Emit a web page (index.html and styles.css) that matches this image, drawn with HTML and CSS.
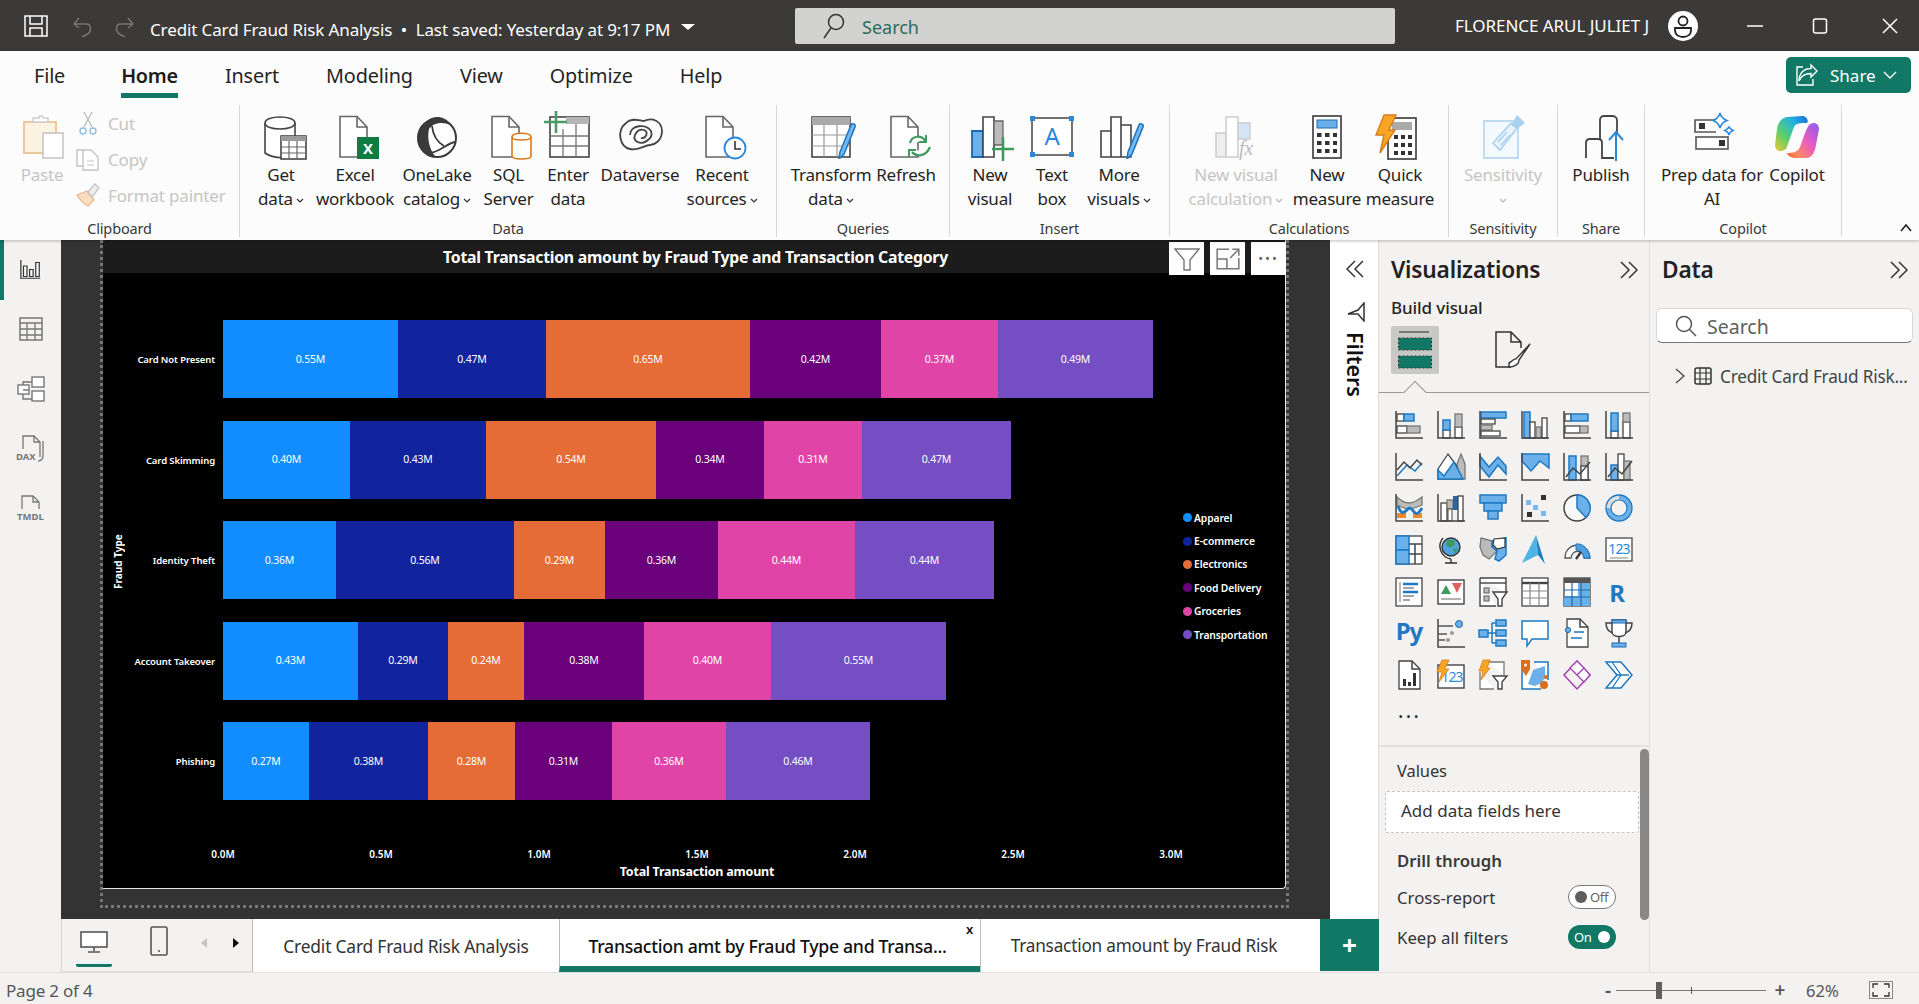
FILE: index.html
```html
<!DOCTYPE html>
<html lang="en">
<head>
<meta charset="utf-8">
<title>Credit Card Fraud Risk Analysis</title>
<link rel="stylesheet" href="styles.css">
</head>
<body>
<svg class="defs" width="0" height="0" aria-hidden="true">
  <defs>
    <linearGradient id="cpA" x1="1" y1="0" x2="0" y2="1"><stop offset="0" stop-color="#1667d9"/><stop offset=".3" stop-color="#22b3e0"/><stop offset=".65" stop-color="#5ccf6a"/><stop offset="1" stop-color="#f0c832"/></linearGradient>
    <linearGradient id="cpB" x1="1" y1="0" x2="0" y2="1"><stop offset="0" stop-color="#8a5cf0"/><stop offset=".45" stop-color="#e85cc0"/><stop offset=".8" stop-color="#ff8a5c"/><stop offset="1" stop-color="#e8562c"/></linearGradient>
    <symbol id="doc" viewBox="0 0 44 44"><path d="M3 1.500H20L30 12V42H3Z" fill="#fff" stroke="#666" stroke-width="1.600"/><path d="M20 1.500V12H30" fill="none" stroke="#666" stroke-width="1.600"/></symbol>
    <symbol id="pencil" viewBox="0 0 44 44"><path d="M27 37L38 10C39 7.500 43 9 42 12L31 39L26 44Z" fill="#7ab9ee" stroke="#1e78c2" stroke-width="1.600"/></symbol>
  </defs>
</svg>

<header class="titlebar">
  <svg class="tb-save" viewBox="0 0 24 22"><path d="M1 1H23V21H1ZM6 1V9H18V1M6 21V13H18V21" fill="none" stroke="#fff" stroke-width="1.500"/></svg>
  <svg class="tb-undo" viewBox="0 0 20 22"><path d="M2 9H14C20 9 20 17 14 20L10 22M2 9L7 3M2 9L7 13" fill="none" stroke="#77766f" stroke-width="1.500"/></svg>
  <svg class="tb-redo" viewBox="0 0 20 22"><path d="M18 9H6C0 9 0 17 6 20L10 22M18 9L13 3M18 9L13 13" fill="none" stroke="#77766f" stroke-width="1.500"/></svg>
  <div class="tb-title">Credit Card Fraud Risk Analysis&nbsp;&nbsp;•&nbsp;&nbsp;Last saved: Yesterday at 9:17 PM</div>
  <span class="tb-caret"></span>
  <div class="tb-search">
    <svg class="tb-search-ic" viewBox="0 0 22 26"><circle cx="13" cy="9" r="7.500" fill="none" stroke="#333" stroke-width="1.500"/><path d="M8 15L1 25" stroke="#333" stroke-width="1.500"/></svg>
    <span class="tb-search-tx">Search</span>
  </div>
  <div class="tb-user">FLORENCE ARUL JULIET J</div>
  <svg class="tb-avatar" viewBox="0 0 30 30"><circle cx="15" cy="15" r="15" fill="#fff"/><circle cx="15" cy="10" r="4.500" fill="none" stroke="#222" stroke-width="1.800"/><path d="M7 17H23V19C23 24 19 26 15 26C11 26 7 24 7 19Z" fill="none" stroke="#222" stroke-width="1.800"/></svg>
  <svg class="tb-min" viewBox="0 0 16 2"><path d="M0 1H16" stroke="#fff" stroke-width="1.500"/></svg>
  <svg class="tb-max" viewBox="0 0 16 16"><rect x="1.500" y="1" width="13" height="14" rx="2" fill="none" stroke="#fff" stroke-width="1.500"/></svg>
  <svg class="tb-x" viewBox="0 0 16 16"><path d="M1 1L15 15M15 1L1 15" stroke="#fff" stroke-width="1.500"/></svg>
</header>

<section class="ribbon">
  <nav class="rb-tabs">
    <span class="rb-tab rb-file">File</span>
    <span class="rb-tab rb-on">Home</span>
    <span class="rb-tab">Insert</span>
    <span class="rb-tab">Modeling</span>
    <span class="rb-tab">View</span>
    <span class="rb-tab">Optimize</span>
    <span class="rb-tab">Help</span>
    <button class="share">
      <svg class="share-ic" viewBox="0 0 22 24"><path d="M15 2L21 8L15 14V10.500C9 10.500 5 13 3 18C3 10 8 5.500 15 5.500Z" fill="none" stroke="#fff" stroke-width="1.400"/><path d="M7 4H1V22H17V16" fill="none" stroke="#fff" stroke-width="1.400"/></svg>
      <span>Share</span>
      <svg class="share-cv" viewBox="0 0 14 8"><path d="M1 1L7 7L13 1" fill="none" stroke="#fff" stroke-width="1.400"/></svg>
    </button>
  </nav>
  <div class="rb-groups">
    <div class="grp g-clip">
      <div class="grp-items">
        <div class="it w-paste off">
          <svg class="ric" viewBox="0 0 44 44"><path d="M4 7H36V38H4Z" fill="#fdf3e3" stroke="#f0c79a" stroke-width="2"/><path d="M13 7V3H19C19 0 23 0 23 3H28V7Z" fill="#fff" stroke="#cfcfcf" stroke-width="1.500"/><rect x="23" y="18" width="20" height="25" fill="#fff" stroke="#c4c4c4" stroke-width="1.500"/></svg>
          <span class="lb">Paste</span>
        </div>
        <div class="clip-col off">
          <div class="clip-row"><svg class="cic" viewBox="0 0 24 24"><path d="M8 1L16 16M16 1L8 16" stroke="#bdbdbd" stroke-width="1.400"/><circle cx="7" cy="20" r="3" fill="none" stroke="#93bde3" stroke-width="1.400"/><circle cx="17" cy="20" r="3" fill="none" stroke="#93bde3" stroke-width="1.400"/></svg><span>Cut</span></div>
          <div class="clip-row"><svg class="cic" viewBox="0 0 24 24"><path d="M7 3H1V19H7M7 3H15L22 10V23H7Z" fill="#fff" stroke="#c4c4c4" stroke-width="1.400"/><path d="M11 14H18M11 18H18" stroke="#c4c4c4" stroke-width="1.200"/></svg><span>Copy</span></div>
          <div class="clip-row"><svg class="cic" viewBox="0 0 24 24"><path d="M1 12L11 8L18 17L12 23C8 21 4 17 1 12Z" fill="#f9ddc0" stroke="#eeb58a" stroke-width="1.300"/><path d="M12 9L19 1L23 5L16 14Z" fill="#eee" stroke="#c4c4c4" stroke-width="1.300"/></svg><span>Format painter</span></div>
        </div>
      </div>
      <div class="grp-lb">Clipboard</div>
    </div>

    <div class="grp g-data">
      <div class="grp-items">
        <div class="it w-get">
          <svg class="ric" viewBox="0 0 44 44"><path d="M2 8C2 0 32 0 32 8V40C32 44 10 44 2 38Z" fill="#fff" stroke="#444" stroke-width="1.600"/><path d="M2 8C2 16 32 16 32 8" fill="none" stroke="#444" stroke-width="1.600"/><rect x="18" y="21" width="25" height="23" fill="#fff" stroke="#444" stroke-width="1.600"/><rect x="18" y="21" width="25" height="5" fill="#9a9a9a"/><path d="M18 32H43M18 38H43M26 26V44M34 26V44" stroke="#666" stroke-width="1.200"/></svg>
          <span class="lb">Get<br>data<svg class="cv" viewBox="0 0 8 5"><path d="M1 1L4 4L7 1" fill="none" stroke="#333" stroke-width="1.200"/></svg></span>
        </div>
        <div class="it w-excel">
          <svg class="ric" viewBox="0 0 44 44"><use href="#doc" width="44" height="44"/><rect x="20" y="22" width="22" height="22" fill="#107c41"/><text x="31" y="39" class="xl">X</text></svg>
          <span class="lb">Excel<br>workbook</span>
        </div>
        <div class="it w-lake">
          <svg class="ric" viewBox="0 0 44 44"><circle cx="22" cy="23" r="19" fill="#fff" stroke="#3a3a3a" stroke-width="2"/><path d="M12 6C4 12 0 26 6 34C10 40 16 42 20 41C14 34 12 22 14 14C18 8 26 6 36 10C30 0 18 0 12 6Z" fill="#3a3a3a"/><path d="M17 11C18 20 22 27 29 31M14 38C24 38 32 28 40 27" fill="none" stroke="#3a3a3a" stroke-width="1.800"/></svg>
          <span class="lb">OneLake<br>catalog<svg class="cv" viewBox="0 0 8 5"><path d="M1 1L4 4L7 1" fill="none" stroke="#333" stroke-width="1.200"/></svg></span>
        </div>
        <div class="it w-sql">
          <svg class="ric" viewBox="0 0 44 44"><use href="#doc" width="44" height="44" x="2"/><path d="M25 22C25 17 44 17 44 22V41C44 45 25 45 25 41Z" fill="#fff" stroke="#d97a1c" stroke-width="1.600"/><path d="M25 22C25 26 44 26 44 22" fill="none" stroke="#d97a1c" stroke-width="1.600"/></svg>
          <span class="lb">SQL<br>Server</span>
        </div>
        <div class="it w-enter">
          <svg class="ric" viewBox="0 0 44 44"><rect x="4" y="2" width="39" height="40" fill="#fff" stroke="#444" stroke-width="1.600"/><rect x="20" y="2" width="23" height="7" fill="#b5b5b5"/><path d="M4 21H43M4 31H43M17 14V42M30 9V42" stroke="#777" stroke-width="1.300"/><path d="M10 -4V18M-2 7H21" stroke="#4a9a6a" stroke-width="2.600"/></svg>
          <span class="lb">Enter<br>data</span>
        </div>
        <div class="it w-dv">
          <svg class="ric" viewBox="0 0 44 44"><path d="M8 8C14 2 22 6 26 6C34 2 44 6 44 16C44 26 36 30 32 30C26 30 22 36 12 34C2 32 -2 16 8 8Z" fill="none" stroke="#444" stroke-width="1.800"/><path d="M12 20C12 10 28 8 33 16C36 24 24 31 18 26C14 22 19 13 26 15C31 17 28 24 23 23" fill="none" stroke="#444" stroke-width="1.800"/></svg>
          <span class="lb">Dataverse</span>
        </div>
        <div class="it w-recent">
          <svg class="ric" viewBox="0 0 44 44"><use href="#doc" width="44" height="44" x="3"/><circle cx="35" cy="33" r="10.500" fill="#fff" stroke="#2b88d8" stroke-width="1.800"/><path d="M35 26V34H41" fill="none" stroke="#333" stroke-width="1.600"/></svg>
          <span class="lb">Recent<br>sources<svg class="cv" viewBox="0 0 8 5"><path d="M1 1L4 4L7 1" fill="none" stroke="#333" stroke-width="1.200"/></svg></span>
        </div>
      </div>
      <div class="grp-lb">Data</div>
    </div>

    <div class="grp g-query">
      <div class="grp-items">
        <div class="it w-trans">
          <svg class="ric" viewBox="0 0 44 44"><rect x="1" y="2" width="38" height="40" fill="#fff" stroke="#444" stroke-width="1.600"/><rect x="1" y="2" width="38" height="8" fill="#aaa"/><path d="M1 20H39M1 31H39M13 10V42M26 10V42" stroke="#999" stroke-width="1.200"/><use href="#pencil" width="44" height="44" x="2"/></svg>
          <span class="lb">Transform<br>data<svg class="cv" viewBox="0 0 8 5"><path d="M1 1L4 4L7 1" fill="none" stroke="#333" stroke-width="1.200"/></svg></span>
        </div>
        <div class="it w-refresh">
          <svg class="ric" viewBox="0 0 44 44"><use href="#doc" width="44" height="44"/><path d="M22 28C24 20 34 20 37 26M42 32C38 42 28 42 24 37" fill="#fff" stroke="#3f9a5f" stroke-width="2.200"/><path d="M38 20V27H31M21 42V35H28" fill="none" stroke="#3f9a5f" stroke-width="2"/></svg>
          <span class="lb">Refresh</span>
        </div>
      </div>
      <div class="grp-lb">Queries</div>
    </div>

    <div class="grp g-insert">
      <div class="grp-items">
        <div class="it w-nv">
          <svg class="ric" viewBox="0 0 44 44"><path d="M2 16H13V42H2Z" fill="#6cb0ea" stroke="#1e68b0" stroke-width="1.800"/><path d="M13 42V2H24V42Z" fill="#fff" stroke="#444" stroke-width="1.600"/><path d="M24 6H33V30H24Z" fill="#bbb" stroke="#666" stroke-width="1.300"/><path d="M33 22V46M22 34H44" stroke="#3f9a5f" stroke-width="2.600"/></svg>
          <span class="lb">New<br>visual</span>
        </div>
        <div class="it w-tb">
          <svg class="ric" viewBox="0 0 44 44"><rect x="2" y="3" width="40" height="37" fill="#fff" stroke="#444" stroke-width="1.500"/><rect x="0" y="1" width="5" height="5" fill="#2b88d8"/><rect x="39" y="1" width="5" height="5" fill="#2b88d8"/><rect x="0" y="37" width="5" height="5" fill="#2b88d8"/><rect x="39" y="37" width="5" height="5" fill="#2b88d8"/><text x="22" y="30" class="ta">A</text></svg>
          <span class="lb">Text<br>box</span>
        </div>
        <div class="it w-more">
          <svg class="ric" viewBox="0 0 44 44"><path d="M2 16H12V42H2ZM12 42V2H22V42ZM22 10H32V42H22Z" fill="#fff" stroke="#444" stroke-width="1.600"/><use href="#pencil" width="44" height="44" x="2"/></svg>
          <span class="lb">More<br>visuals<svg class="cv" viewBox="0 0 8 5"><path d="M1 1L4 4L7 1" fill="none" stroke="#333" stroke-width="1.200"/></svg></span>
        </div>
      </div>
      <div class="grp-lb">Insert</div>
    </div>

    <div class="grp g-calc">
      <div class="grp-items">
        <div class="it w-nvc off">
          <svg class="ric" viewBox="0 0 44 44"><path d="M2 18H12V42H2Z" fill="#eee" stroke="#ccc" stroke-width="1.500"/><path d="M12 42V2H24V42Z" fill="#fff" stroke="#ccc" stroke-width="1.500"/><path d="M24 8H36V24H24Z" fill="#d3e5f5" stroke="#ccc" stroke-width="1.300"/><text x="32" y="40" class="fx">fx</text></svg>
          <span class="lb">New visual<br>calculation<svg class="cv" viewBox="0 0 8 5"><path d="M1 1L4 4L7 1" fill="none" stroke="#bbb" stroke-width="1.200"/></svg></span>
        </div>
        <div class="it w-nm">
          <svg class="ric" viewBox="0 0 44 44"><rect x="8" y="1" width="28" height="42" fill="#fff" stroke="#444" stroke-width="1.700"/><rect x="12" y="5" width="20" height="8" fill="#6cb0ea" stroke="#1e68b0"/><path d="M12 20H32M12 28H32M12 36H32" stroke="#333" stroke-width="4" stroke-dasharray="4.500 3.500"/></svg>
          <span class="lb">New<br>measure</span>
        </div>
        <div class="it w-qm">
          <svg class="ric" viewBox="0 0 44 44"><rect x="14" y="3" width="28" height="41" fill="#fff" stroke="#444" stroke-width="1.700"/><rect x="18" y="7" width="20" height="8" fill="#aaa"/><path d="M20 22H38M20 30H38M20 38H38" stroke="#333" stroke-width="4" stroke-dasharray="4 3"/><path d="M10 0H22L15 15H21L6 38L10 20H2Z" fill="#f6a623" stroke="#d97a1c" stroke-width="1.400"/></svg>
          <span class="lb">Quick<br>measure</span>
        </div>
      </div>
      <div class="grp-lb">Calculations</div>
    </div>

    <div class="grp g-sens">
      <div class="grp-items">
        <div class="it w-sen off">
          <svg class="ric" viewBox="0 0 44 44"><path d="M3 6H37V43H3Z" fill="#f4f9fd" stroke="#bcdaf2" stroke-width="1.800"/><path d="M12 28L30 8L36 13L19 35Z" fill="#e9f3fb" stroke="#a8d0ef" stroke-width="1.500"/><path d="M30 10L36 0L44 8L36 14Z" fill="#a8d0ef"/><path d="M17 27L26 17M20 30L29 20" stroke="#a8d0ef" stroke-width="1.300"/></svg>
          <span class="lb">Sensitivity<br><svg class="cv cv-solo" viewBox="0 0 8 5"><path d="M1 1L4 4L7 1" fill="none" stroke="#bbb" stroke-width="1.200"/></svg></span>
        </div>
      </div>
      <div class="grp-lb">Sensitivity</div>
    </div>

    <div class="grp g-share">
      <div class="grp-items">
        <div class="it w-pub">
          <svg class="ric" viewBox="0 0 44 44"><path d="M17 24V5C17 2 19 1 21 1H29C32 1 34 3 34 5V18" fill="none" stroke="#444" stroke-width="1.800"/><path d="M3 43V28C3 25 5 24 7 24H15C18 24 19 26 19 28V43H31" fill="none" stroke="#444" stroke-width="1.800"/><path d="M33 46V17M26 25L33 17L40 25" fill="none" stroke="#2b88d8" stroke-width="2"/></svg>
          <span class="lb">Publish</span>
        </div>
      </div>
      <div class="grp-lb">Share</div>
    </div>

    <div class="grp g-cop">
      <div class="grp-items">
        <div class="it w-prep">
          <svg class="ric" viewBox="0 0 44 44"><path d="M26 5H5V17H26" fill="none" stroke="#555" stroke-width="1.600"/><rect x="9" y="8" width="6" height="6" fill="#333"/><rect x="6" y="22" width="32" height="12" fill="#fff" stroke="#555" stroke-width="1.600"/><rect x="29" y="25" width="6" height="6" fill="#333"/><path d="M30 -2C31 2 33 4 37 5.500C33 7 31 9 30 13C29 9 27 7 23 5.500C27 4 29 2 30 -2ZM39 11.500C39.500 13.500 40.500 14.500 43 15.500C40.500 16.500 39.500 17.500 39 20C38.500 17.500 37.500 16.500 35 15.500C37.500 14.500 38.500 13.500 39 11.500Z" fill="#fff" stroke="#2b88d8" stroke-width="1.500"/></svg>
          <span class="lb">Prep data for<br>AI</span>
        </div>
        <div class="it w-cop">
          <svg class="ric ric-cop" viewBox="0 0 44 44"><path d="M44 14C44 8 38 6 34 10C31 14 28 24 25 32C23 37 18 38 12 38C13 42 18 43 22 43H32C38 42 40 36 41 30Z" fill="url(#cpB)"/><path d="M12 2C6 3 3 8 2 14L0 30C0 36 6 38 11 34C13 30 16 20 19 12C21 8 26 8 32 8C34 6 32 2 28 1Z" fill="url(#cpA)"/></svg>
          <span class="lb">Copilot</span>
        </div>
      </div>
      <div class="grp-lb">Copilot</div>
    </div>
  </div>
  <svg class="rb-collapse" viewBox="0 0 12 8"><path d="M1 7L6 1L11 7" fill="none" stroke="#222" stroke-width="1.600"/></svg>
</section>

<main class="workspace">
  <aside class="rail">
    <div class="rail-item rail-on"><svg class="r-rep" viewBox="0 0 24 24"><path d="M1 1V22H23" fill="none" stroke="#333" stroke-width="1.400"/><path d="M4 8H8V20H4ZM11 12H15V20H11ZM18 4H22V20H18Z" fill="#fff" stroke="#333" stroke-width="1.400"/></svg></div>
    <div class="rail-item"><svg class="r-tab" viewBox="0 0 24 24"><rect x="1" y="1" width="22" height="22" fill="none" stroke="#777" stroke-width="1.500"/><path d="M1 6H23M1 12H23M1 18H23M8 6V23M16 6V23" stroke="#777" stroke-width="1.300"/></svg></div>
    <div class="rail-item"><svg class="r-mod" viewBox="0 0 28 28"><rect x="1" y="10" width="11" height="9" fill="#fff" stroke="#777" stroke-width="1.400"/><rect x="15" y="2" width="12" height="10" fill="#fff" stroke="#777" stroke-width="1.400"/><rect x="15" y="16" width="12" height="10" fill="#fff" stroke="#777" stroke-width="1.400"/><path d="M12 7H15M6 10V7H12M6 19V24H15M6 15H12" fill="none" stroke="#777" stroke-width="1.400"/></svg></div>
    <div class="rail-item"><svg class="r-txt" viewBox="0 0 30 28"><path d="M7 14V1H18L24 7V22M18 1V7H24M27 6V20C27 24 25 26 22 26" fill="none" stroke="#777" stroke-width="1.300"/><text x="0" y="25" class="rail-tx">DAX</text></svg></div>
    <div class="rail-item"><svg class="r-txt" viewBox="0 0 30 28"><path d="M6 14V1H17L23 7V14M17 1V7H23" fill="none" stroke="#777" stroke-width="1.300"/><text x="1" y="25" class="rail-tx">TMDL</text></svg></div>
  </aside>

  <div class="center">
    <div class="center-top">
      <div class="canvas">
        <div class="focus">
          <article class="visual">
            <h2 class="vis-title">Total Transaction amount by Fraud Type and Transaction Category</h2>
            <div class="vis-actions">
              <span class="va"><svg viewBox="0 0 26 24"><path d="M1 2H25L16 13V23H10V13Z" fill="none" stroke="#777" stroke-width="1.400"/></svg></span>
              <span class="va"><svg viewBox="0 0 24 22"><path d="M13 2H2V20H22V10M2 11H11V20" fill="none" stroke="#777" stroke-width="1.400"/><path d="M14 10L22 2M16 2H22V8" fill="none" stroke="#777" stroke-width="1.400"/></svg></span>
              <span class="va va-dots">•••</span>
            </div>
            <div class="chart">
              <div class="y-title">Fraud Type</div>
              <div class="plot">
                <div class="row"><span class="cat">Card Not Present</span>
                  <div class="bar"><span class="seg c1" style="width:175px">0.55M</span><span class="seg c2" style="width:148px">0.47M</span><span class="seg c3" style="width:204px">0.65M</span><span class="seg c4" style="width:131px">0.42M</span><span class="seg c5" style="width:117px">0.37M</span><span class="seg c6" style="width:155px">0.49M</span></div></div>
                <div class="row"><span class="cat">Card Skimming</span>
                  <div class="bar"><span class="seg c1" style="width:127px">0.40M</span><span class="seg c2" style="width:136px">0.43M</span><span class="seg c3" style="width:170px">0.54M</span><span class="seg c4" style="width:108px">0.34M</span><span class="seg c5" style="width:98px">0.31M</span><span class="seg c6" style="width:149px">0.47M</span></div></div>
                <div class="row"><span class="cat">Identity Theft</span>
                  <div class="bar"><span class="seg c1" style="width:113px">0.36M</span><span class="seg c2" style="width:178px">0.56M</span><span class="seg c3" style="width:91px">0.29M</span><span class="seg c4" style="width:113px">0.36M</span><span class="seg c5" style="width:137px">0.44M</span><span class="seg c6" style="width:139px">0.44M</span></div></div>
                <div class="row"><span class="cat">Account Takeover</span>
                  <div class="bar"><span class="seg c1" style="width:135px">0.43M</span><span class="seg c2" style="width:90px">0.29M</span><span class="seg c3" style="width:76px">0.24M</span><span class="seg c4" style="width:120px">0.38M</span><span class="seg c5" style="width:127px">0.40M</span><span class="seg c6" style="width:175px">0.55M</span></div></div>
                <div class="row"><span class="cat">Phishing</span>
                  <div class="bar"><span class="seg c1" style="width:86px">0.27M</span><span class="seg c2" style="width:119px">0.38M</span><span class="seg c3" style="width:87px">0.28M</span><span class="seg c4" style="width:97px">0.31M</span><span class="seg c5" style="width:114px">0.36M</span><span class="seg c6" style="width:144px">0.46M</span></div></div>
              </div>
              <ul class="legend">
                <li><i class="c1"></i>Apparel</li>
                <li><i class="c2"></i>E-commerce</li>
                <li><i class="c3"></i>Electronics</li>
                <li><i class="c4"></i>Food Delivery</li>
                <li><i class="c5"></i>Groceries</li>
                <li><i class="c6"></i>Transportation</li>
              </ul>
            </div>
            <div class="x-ticks"><span>0.0M</span><span>0.5M</span><span>1.0M</span><span>1.5M</span><span>2.0M</span><span>2.5M</span><span>3.0M</span></div>
            <div class="x-title">Total Transaction amount</div>
          </article>
        </div>
      </div>
      <aside class="filters">
        <svg class="chev2" viewBox="0 0 18 18"><path d="M9 1L1 9L9 17M17 1L9 9L17 17" fill="none" stroke="#333" stroke-width="1.500"/></svg>
        <svg class="fil-ic" viewBox="0 0 18 20"><path d="M17 1V19L11 12H1L11 8Z" fill="none" stroke="#333" stroke-width="1.500"/></svg>
        <div class="fil-tx">Filters</div>
      </aside>
    </div>
    <div class="tabbar">
      <div class="tab-tools">
        <div class="tool tool-desk"><svg viewBox="0 0 28 22"><rect x="1" y="1" width="26" height="15" fill="#fff" stroke="#555" stroke-width="1.600"/><path d="M14 16V20M8 21H20" stroke="#555" stroke-width="1.600"/></svg></div>
        <div class="tool tool-phone"><svg viewBox="0 0 18 30"><rect x="1" y="1" width="16" height="28" rx="1.500" fill="none" stroke="#555" stroke-width="1.600"/><circle cx="9" cy="25" r="1" fill="#555"/></svg></div>
        <span class="arrow arrow-l"></span>
        <span class="arrow arrow-r"></span>
      </div>
      <div class="ptab ptab-1">Credit Card Fraud Risk Analysis</div>
      <div class="ptab ptab-2">Transaction amt by Fraud Type and Transa...<span class="ptab-x">x</span></div>
      <div class="ptab ptab-3">Transaction amount by Fraud Risk</div>
      <div class="ptab-add">+</div>
    </div>
  </div>

  <aside class="viz">
    <div class="pane-head"><h3>Visualizations</h3><svg class="chev2" viewBox="0 0 18 18"><path d="M1 1L9 9L1 17M9 1L17 9L9 17" fill="none" stroke="#333" stroke-width="1.500"/></svg></div>
    <div class="build-tx">Build visual</div>
    <div class="build-row">
      <span class="build-on"><svg viewBox="0 0 36 40"><path d="M2 2H32" stroke="#555" stroke-width="1.400"/><rect x="1.500" y="8" width="33" height="12" fill="#117865" stroke="#333" stroke-dasharray="2 2"/><rect x="1.500" y="26" width="33" height="12" fill="#117865" stroke="#333" stroke-dasharray="2 2"/></svg></span>
      <svg class="build-fmt" viewBox="0 0 36 38"><path d="M16 36H1V1H16L26 11V17M16 1V11H26" fill="none" stroke="#333" stroke-width="1.500"/><path d="M14 32C18 30 19 27 21 28L35 13L24 29C24 34 18 36 14 36Z" fill="#fff" stroke="#333" stroke-width="1.400"/></svg>
    </div>
    <div class="notch-line"><span class="notch"></span></div>
    <div class="viz-grid">
      <svg class="vi" viewBox="0 0 28 30"><rect x="2" y="4" width="7" height="7" class="w"/><rect x="9" y="4" width="10" height="7" class="b"/><rect x="2" y="16" width="10" height="7" class="w"/><rect x="12" y="16" width="13" height="7" class="g"/><path d="M1 1V28H28" class="a"/></svg>
      <svg class="vi" viewBox="0 0 28 30"><rect x="6" y="20" width="7" height="8" class="w"/><rect x="6" y="10" width="7" height="10" class="b"/><rect x="18" y="17" width="7" height="11" class="w"/><rect x="18" y="4" width="7" height="13" class="g"/><path d="M1 1V28H28" class="a"/></svg>
      <svg class="vi" viewBox="0 0 28 30"><rect x="2" y="2" width="25" height="6" class="b"/><rect x="2" y="9" width="14" height="5" class="w"/><rect x="2" y="15" width="11" height="5" class="g"/><rect x="2" y="21" width="19" height="5" class="w"/><path d="M1 1V28H28" class="a"/></svg>
      <svg class="vi" viewBox="0 0 28 30"><rect x="3" y="2" width="6" height="26" class="b"/><rect x="9" y="12" width="5" height="16" class="w"/><rect x="15" y="17" width="5" height="11" class="g"/><rect x="21" y="8" width="5" height="20" class="w"/><path d="M1 1V28H28" class="a"/></svg>
      <svg class="vi" viewBox="0 0 28 30"><rect x="2" y="4" width="6" height="7" class="w"/><rect x="8" y="4" width="17" height="7" class="b"/><rect x="2" y="16" width="15" height="7" class="w"/><rect x="17" y="16" width="8" height="7" class="g"/><path d="M1 1V28H28" class="a"/></svg>
      <svg class="vi" viewBox="0 0 28 30"><rect x="6" y="21" width="7" height="7" class="w"/><rect x="6" y="3" width="7" height="18" class="b"/><rect x="18" y="12" width="7" height="16" class="w"/><rect x="18" y="3" width="7" height="9" class="g"/><path d="M1 1V28H28" class="a"/></svg>

      <svg class="vi" viewBox="0 0 28 30"><path d="M2 24L12 13L20 19L27 11" class="l"/><path d="M2 18L9 10L15 16L22 8L27 13" class="ld"/><path d="M1 1V28H28" class="a"/></svg>
      <svg class="vi" viewBox="0 0 28 30"><path d="M20 12L24 2L28 12V27H20Z" class="g"/><path d="M1 17L11 2L20 14L24 27H1Z" class="w"/><path d="M1 27V18L7 24L17 10L26 27Z" class="b"/></svg>
      <svg class="vi" viewBox="0 0 28 30"><path d="M1 4L10 15L19 5L27 14V22L19 13L10 25L1 14Z" class="b"/><path d="M1 1V28H28" class="a"/></svg>
      <svg class="vi" viewBox="0 0 28 30"><path d="M1 2H28V16L19 9L10 19L1 9Z" class="b"/><path d="M1 1V28H28" class="a"/></svg>
      <svg class="vi" viewBox="0 0 28 30"><rect x="6" y="4" width="7" height="24" class="b"/><rect x="18" y="4" width="7" height="24" class="g"/><rect x="18" y="14" width="7" height="14" class="w"/><path d="M3 25L10 16L17 22L27 10" class="ld"/><path d="M1 1V28H28" class="a"/></svg>
      <svg class="vi" viewBox="0 0 28 30"><rect x="6" y="13" width="7" height="15" class="b"/><rect x="13" y="2" width="6" height="26" class="w"/><rect x="19" y="9" width="6" height="19" class="g"/><path d="M3 25L10 16L17 22L27 9" class="ld"/><path d="M1 1V28H28" class="a"/></svg>

      <svg class="vi" viewBox="0 0 28 30"><rect x="2" y="20" width="9" height="5" fill="#ee8a2c"/><rect x="18" y="20" width="9" height="5" fill="#ee8a2c"/><path d="M2 4C6 8 10 10 14 10C18 10 22 8 27 4V12C22 14 18 16 14 16C10 16 6 14 2 12Z" class="g"/><path d="M3 13C8 27 12 14 15 15C19 16 20 27 27 15" fill="none" stroke="#1e78c2" stroke-width="2.800"/><path d="M1 1V28H28" class="a"/></svg>
      <svg class="vi" viewBox="0 0 28 30"><rect x="4" y="10" width="6" height="18" class="w"/><rect x="10" y="7" width="6" height="9" class="g"/><rect x="16" y="3" width="5" height="14" fill="#1e68b0"/><rect x="21" y="3" width="5" height="25" class="w"/><rect x="11" y="16" width="4" height="12" fill="#fff" stroke="#444"/><path d="M1 1V28H28" class="a"/></svg>
      <svg class="vi" viewBox="0 0 28 30"><rect x="1" y="2" width="26" height="8" class="b"/><rect x="5" y="10" width="18" height="8" class="b"/><rect x="9" y="18" width="10" height="8" class="b"/></svg>
      <svg class="vi" viewBox="0 0 28 30"><rect x="5" y="7" width="5" height="5" fill="#7ab9ee"/><rect x="12" y="12" width="5" height="5" fill="#7ab9ee"/><rect x="20" y="2" width="5" height="5" fill="#333"/><rect x="6" y="19" width="5" height="5" fill="#333"/><rect x="20" y="18" width="5" height="5" fill="#7ab9ee"/><path d="M1 1V28H28" class="a"/></svg>
      <svg class="vi" viewBox="0 0 28 30"><circle cx="14" cy="15" r="13" fill="#f8f8f8" stroke="#444" stroke-width="1.500"/><path d="M14 2A13 13 0 0 1 23 24.500L14 15Z" class="b"/></svg>
      <svg class="vi" viewBox="0 0 28 30"><circle cx="14" cy="15" r="10.500" fill="none" stroke="#6cb0ea" stroke-width="5"/><path d="M3.500 15A10.500 10.500 0 0 1 14 4.500" fill="none" stroke="#ddd" stroke-width="5"/><circle cx="14" cy="15" r="13" fill="none" stroke="#1e78c2" stroke-width="1.300"/><circle cx="14" cy="15" r="8" fill="#f3f2f1" stroke="#1e78c2" stroke-width="1.200"/></svg>

      <svg class="vi" viewBox="0 0 28 30"><rect x="1" y="1" width="26" height="28" class="w"/><rect x="1" y="1" width="13" height="14" class="b"/><rect x="1" y="15" width="13" height="14" class="b"/><path d="M14 9H27M20 9V29M14 19H27" class="a"/></svg>
      <svg class="vi" viewBox="0 0 28 30"><circle cx="14" cy="12" r="9" fill="#4fa3e0" stroke="#333" stroke-width="1.400"/><path d="M10 5L17 5L18 10L13 13L9 10Z" fill="#3f9a5f"/><path d="M16 14L21 13L18 19Z" fill="#3f9a5f"/><path d="M6 3C0 10 3 22 14 24M14 24V28M8 28H20" fill="none" stroke="#333" stroke-width="1.400"/></svg>
      <svg class="vi" viewBox="0 0 28 30"><path d="M2 3L13 6V12L18 16L10 24L4 20L1 12Z" class="g"/><path d="M13 6L27 3V20L20 26L16 24L18 16L13 12Z" class="b"/><path d="M15 4L26 3V12L18 14L14 10Z" fill="#fff" stroke="#333" stroke-width="1.200"/></svg>
      <svg class="vi" viewBox="0 0 28 30"><path d="M15 0L1 28L17 20Z" fill="#50b3e6"/><path d="M15 0L24 29L17 20Z" fill="#1a80c4"/></svg>
      <svg class="vi" viewBox="0 0 28 30"><path d="M2 23C2 6 26 6 27 23H21C20 14 9 14 8 23Z" fill="#fff" stroke="#555" stroke-width="1.300"/><path d="M13 9C20 8 26 14 27 23H21C20 18 17 15 13 15Z" fill="#4d9fe0" stroke="#1e78c2" stroke-width="1"/><path d="M13 24L18 17" stroke="#333" stroke-width="2.200"/></svg>
      <svg class="vi" viewBox="0 0 28 30"><rect x="1" y="3" width="26" height="23" fill="#fff" stroke="#555" stroke-width="1.400"/><text x="14" y="19" class="n123">123</text><path d="M5 23H23" stroke="#888"/></svg>

      <svg class="vi" viewBox="0 0 28 30"><rect x="1" y="1" width="26" height="28" class="w"/><path d="M5 5V25" stroke="#999" stroke-width="1.400"/><path d="M8 7H23M8 15H23" stroke="#1e78c2" stroke-width="2.400"/><path d="M8 11H19M8 19H19M8 23H15" stroke="#888" stroke-width="1.400"/></svg>
      <svg class="vi" viewBox="0 0 28 30"><rect x="1" y="3" width="26" height="24" fill="#fff" stroke="#444" stroke-width="1.400"/><path d="M4 17L9 8L14 17Z" fill="#3f9a5f"/><path d="M15 6H25L20 16Z" fill="#e06060"/><path d="M4 22H24" stroke="#888" stroke-width="1.300"/></svg>
      <svg class="vi" viewBox="0 0 28 30"><path d="M1 1H27V16M17 29H1V1" fill="#fff" stroke="#444" stroke-width="1.400"/><path d="M1 6H27" stroke="#444" stroke-width="1.400"/><rect x="5" y="11" width="5" height="5" class="g"/><rect x="5" y="19" width="5" height="5" class="g"/><path d="M14 15H28L23 22V29H19V22Z" fill="#fff" stroke="#444" stroke-width="1.400"/></svg>
      <svg class="vi" viewBox="0 0 28 30"><rect x="1" y="1" width="26" height="28" class="w"/><path d="M1 6H27" stroke="#444" stroke-width="2.400"/><path d="M1 14H27M1 21H27M9 6V29M18 6V29" stroke="#888" stroke-width="1.200"/></svg>
      <svg class="vi" viewBox="0 0 28 30"><rect x="1" y="1" width="26" height="28" class="w"/><rect x="1" y="1" width="26" height="5" fill="#555"/><rect x="15" y="6" width="12" height="16" fill="#6cb0ea"/><rect x="1" y="19" width="26" height="10" fill="#6cb0ea"/><path d="M1 13H27M1 20H27M9 6V29M18 6V29" stroke="#1e68b0" stroke-width="1.200"/></svg>
      <svg class="vi" viewBox="0 0 28 30"><text x="12" y="25" class="ltr-r">R</text></svg>

      <svg class="vi" viewBox="0 0 28 30"><text x="14" y="22" class="ltr-py">Py</text></svg>
      <svg class="vi" viewBox="0 0 28 30"><path d="M1 1V29H28" class="a"/><path d="M1 8H16M1 16H10M1 22H8" stroke="#555" stroke-width="1.300"/><circle cx="22" cy="6" r="3.500" fill="#6cb0ea" stroke="#1e68b0"/><circle cx="15" cy="15" r="2" fill="#999"/><circle cx="11" cy="22" r="2" fill="#999"/></svg>
      <svg class="vi" viewBox="0 0 28 30"><rect x="0" y="12" width="9" height="7" class="b"/><rect x="17" y="2" width="10" height="6" class="b"/><rect x="17" y="12" width="10" height="6" class="b"/><rect x="17" y="22" width="10" height="6" class="b"/><path d="M9 15H17M13 5H17M13 25H17M13 5V25" class="a2"/></svg>
      <svg class="vi" viewBox="0 0 28 30"><path d="M1 3H27V21H11L6 28V21H1Z" fill="#fff" stroke="#1e78c2" stroke-width="1.500"/></svg>
      <svg class="vi" viewBox="0 0 28 30"><path d="M4 1H17L25 9V29H4Z" class="w"/><path d="M17 1V9H25" class="a"/><circle cx="5" cy="12" r="2.600" fill="#6cb0ea" stroke="#1e68b0"/><path d="M11 14H21M8 20H19" stroke="#1e78c2" stroke-width="1.600"/></svg>
      <svg class="vi" viewBox="0 0 28 30"><path d="M7 2H21V14C21 20 7 20 7 14Z" fill="#fff" stroke="#444" stroke-width="1.500"/><path d="M7 2H21V5H7Z" fill="#6cb0ea" stroke="#1e68b0"/><path d="M7 5H1C1 12 4 14 8 15M21 5H27C27 12 24 14 20 15M14 19V25" fill="none" stroke="#444" stroke-width="1.500"/><rect x="7" y="25" width="14" height="4" fill="#6cb0ea" stroke="#1e68b0"/></svg>

      <svg class="vi" viewBox="0 0 28 30"><path d="M4 1H17L25 9V29H4Z" class="w"/><path d="M17 1V9H25" class="a"/><path d="M8 19H11V26H8ZM13 22H16V26H13ZM18 13H21V26H18Z" fill="#333"/></svg>
      <svg class="vi" viewBox="0 0 28 30"><rect x="1" y="5" width="26" height="23" fill="#fff" stroke="#444" stroke-width="1.400"/><text x="15" y="22" class="n123">123</text><path d="M5 0H12L8 9H12L2 22L5 12H0Z" fill="#f6a623" stroke="#d97a1c" stroke-width=".8"/></svg>
      <svg class="vi" viewBox="0 0 28 30"><path d="M9 2H25V15M15 29H1V12" fill="#fff" stroke="#777" stroke-width="1.300"/><path d="M14 16H28L23 22V29H19V22Z" fill="#fff" stroke="#444" stroke-width="1.400"/><path d="M4 0H11L8 8H11L2 20L4 11H0Z" fill="#f6a623" stroke="#d97a1c" stroke-width=".8"/></svg>
      <svg class="vi" viewBox="0 0 28 30"><path d="M1 6V29H20M13 2H27V20" fill="#fff" stroke="#1e78c2" stroke-width="1.500"/><path d="M12 10L24 6V18L20 23L14 26L7 24L10 16Z" fill="#6cb0ea"/><path d="M0 0H9V9L5 16L0 9Z" fill="#d86f1c"/><circle cx="4.500" cy="5" r="1.500" fill="#fff"/><circle cx="25" cy="17" r="2" fill="#d86f1c"/><circle cx="23" cy="25" r="4" fill="#d86f1c"/></svg>
      <svg class="vi" viewBox="0 0 28 30"><path d="M14 1L27 15L14 29L1 15Z" fill="none" stroke="#a33fb0" stroke-width="1.500"/><path d="M14 1L21 8L14 15L7 8ZM21 8L27 15L21 22L14 15Z" fill="#fff" stroke="#a33fb0" stroke-width="1.300"/></svg>
      <svg class="vi" viewBox="0 0 28 30"><path d="M1 2H16L27 15L16 28H1L12 15Z" fill="#fff" stroke="#1e78c2" stroke-width="1.500"/><path d="M7 2L16 15L7 28M12 15H24" fill="none" stroke="#1e78c2" stroke-width="1.300"/></svg>
      <span class="vi vi-more">• • •</span>
    </div>

    <div class="wells">
      <div class="well-lb">Values</div>
      <div class="well-box">Add data fields here</div>
      <div class="drill">Drill through</div>
      <div class="tg-row"><span>Cross-report</span><span class="tg tg-off"><i></i>Off</span></div>
      <div class="tg-row"><span>Keep all filters</span><span class="tg tg-on">On<i></i></span></div>
      <span class="scroll"></span>
    </div>
  </aside>

  <aside class="data">
    <div class="pane-head"><h3>Data</h3><svg class="chev2" viewBox="0 0 18 18"><path d="M1 1L9 9L1 17M9 1L17 9L9 17" fill="none" stroke="#333" stroke-width="1.500"/></svg></div>
    <div class="data-search">
      <svg viewBox="0 0 22 22"><circle cx="9" cy="9" r="7.500" fill="none" stroke="#555" stroke-width="1.500"/><path d="M14 14L21 21" stroke="#555" stroke-width="1.500"/></svg>
      <span>Search</span>
    </div>
    <div class="tree">
      <svg class="tree-cv" viewBox="0 0 10 16"><path d="M1 1L9 8L1 15" fill="none" stroke="#444" stroke-width="1.300"/></svg>
      <svg class="tree-ic" viewBox="0 0 18 18"><rect x="1" y="1" width="16" height="16" rx="2" fill="none" stroke="#333" stroke-width="1.500"/><path d="M1 6H17M1 12H17M6 1V17M12 1V17" stroke="#333" stroke-width="1.200"/></svg>
      <span>Credit Card Fraud Risk...</span>
    </div>
  </aside>
</main>

<footer class="status">
  <span class="page-no">Page 2 of 4</span>
  <span class="zm-btn">-</span>
  <div class="slider"><span class="tick"></span><span class="thumb"></span></div>
  <span class="zm-btn zm-plus">+</span>
  <span class="zm-val">62%</span>
  <svg class="fit" viewBox="0 0 24 18"><rect x=".5" y=".5" width="23" height="17" fill="none" stroke="#888"/><path d="M4 7V3H9M15 3H20V7M4 11V15H9M20 11V15H15" fill="none" stroke="#333" stroke-width="1.300"/></svg>
</footer>
</body>
</html>
```

FILE: styles.css
```css
*{box-sizing:border-box}
html,body{margin:0;padding:0}
body{width:1919px;height:1004px;overflow:hidden;display:flex;flex-direction:column;font-family:"Noto Sans","Open Sans",sans-serif;color:#252423;background:#f3f2f1}
.defs{position:absolute}
svg{display:block;flex:none}

/* title bar */
.titlebar{height:51px;background:#3b3a38;display:flex;align-items:center;color:#fff;flex:none}
.tb-save{width:24px;height:22px;margin-left:24px}
.tb-undo{width:20px;height:22px;margin-left:24px}
.tb-redo{width:20px;height:22px;margin-left:23px}
.tb-title{font-size:17px;margin-left:15px;width:520px;white-space:nowrap;letter-spacing:-.12px;padding-top:8px}
.tb-caret{width:0;height:0;border-left:7px solid transparent;border-right:7px solid transparent;border-top:6px solid #fff;margin-left:11px;margin-top:3px}
.tb-search{width:600px;height:36px;background:#d2d2d0;border-radius:2px;margin-left:100px;display:flex;align-items:center;padding-left:28px}
.tb-search-ic{width:22px;height:26px}
.tb-search-tx{color:#2c6b60;font-size:18px;margin-left:17px;padding-top:2px}
.tb-user{font-size:17px;margin-left:60px;width:198px;white-space:nowrap;letter-spacing:-.05px}
.tb-avatar{width:30px;height:30px;margin-left:15px}
.tb-min{width:16px;height:2px;margin-left:49px}
.tb-max{width:16px;height:16px;margin-left:49px}
.tb-x{width:16px;height:16px;margin-left:54px}

/* ribbon */
.ribbon{height:189px;background:#fcfcfc;flex:none;position:relative;box-shadow:0 1px 3px rgba(0,0,0,.25);z-index:2}
.rb-tabs{height:54px;display:flex;align-items:flex-start;gap:47px;padding-left:34px}
.rb-tab{font-size:19.800px;height:47px;line-height:50px;letter-spacing:-.12px;position:relative;white-space:nowrap}
.rb-file{margin-right:9px}
.rb-on{font-weight:600;color:#1c1b1a;letter-spacing:-.25px}
.rb-on::after{content:"";position:absolute;left:0;right:0;top:42px;height:5px;background:#117865}
.share{margin-left:auto;margin-right:8px;margin-top:6px;width:125px;height:36px;background:#117865;border:0;border-radius:5px;color:#fff;font:17px "Noto Sans",sans-serif;display:flex;align-items:center;gap:12px;padding:0 0 0 10px}
.share-ic{width:22px;height:24px}
.share-cv{width:14px;height:8px;margin-left:-5px}
.rb-groups{display:flex;height:132px}
.grp{display:flex;flex-direction:column;border-right:1px solid #d8d8d6;height:132px}
.grp-items{display:flex;flex:1}
.grp-lb{height:16px;line-height:15px;text-align:center;font-size:14.500px;color:#3a3938;letter-spacing:-.15px;white-space:nowrap}
.g-clip{width:240px}
.g-data{width:537px}
.g-data .grp-items{padding-left:6px}
.g-query{width:173px}
.g-query .grp-items{padding-left:8px}
.g-insert{width:220px}
.g-insert .grp-items{padding-left:4px}
.g-calc{width:279px}
.g-calc .grp-items{padding-left:11px}
.g-sens{width:109px}
.g-share{width:87px}
.g-cop{width:197px}
.g-cop .grp-items{padding-left:7px}
.it{display:flex;flex-direction:column;align-items:center;padding-top:10px;flex:none;font-size:17px;letter-spacing:-.2px}
.ric{width:44px;height:44px;margin-bottom:4px;overflow:visible}
.w-get .ric,.w-excel .ric{margin-left:7px}
.w-refresh .ric,.w-pub .ric{margin-left:7px}
.w-nv .ric,.w-more .ric,.w-trans .ric{margin-left:4px}
.w-qm .ric{margin-right:9px}
.lb{line-height:24px;text-align:center;white-space:nowrap;display:block}
.cv{display:inline-block;width:8px;height:5px;margin-left:3px;vertical-align:2px}
.cv-solo{margin:0}
.off{color:#c6c5c3}
.w-paste{width:84px}
.clip-col{display:flex;flex-direction:column;margin-left:-8px;font-size:17px;letter-spacing:-.15px}
.clip-row{display:flex;align-items:center;height:36px;gap:8px}
.cic{width:24px;height:24px}
.w-get{width:70px}.w-excel{width:78px}.w-lake{width:86px}.w-sql{width:57px}.w-enter{width:62px}.w-dv{width:82px}.w-recent{width:82px}
.w-trans{width:92px}.w-refresh{width:58px}
.w-nv{width:72px}.w-tb{width:52px}.w-more{width:82px}
.w-nvc{width:110px}.w-nm{width:72px}.w-qm{width:74px}
.w-sen{width:108px}
.w-pub{width:86px}
.w-prep{width:120px}.w-cop{width:50px}
.xl{font:700 15px "Noto Sans",sans-serif;fill:#fff;text-anchor:middle}
.ta{font:24px "Noto Sans",sans-serif;fill:#2b88d8;text-anchor:middle}
.fx{font:italic 20px "Liberation Serif",serif;fill:#bbb;text-anchor:middle}
.rb-collapse{position:absolute;right:7px;bottom:8px;width:12px;height:8px}

/* workspace */
.workspace{height:732px;display:flex;flex:none}
.rail{width:61px;background:#f3f2f1;flex:none}
.rail-item{height:60px;display:flex;align-items:center;justify-content:center;border-left:4px solid transparent;padding-right:4px;padding-bottom:2px}
.rail-on{border-left-color:#117865}
.r-rep{width:21px;height:21px}
.r-tab{width:24px;height:24px}
.r-mod{width:28px;height:28px}
.r-txt{width:30px;height:28px;overflow:visible}
.rail-tx{font:700 9.500px "Noto Sans",sans-serif;fill:#777}
.center{width:1318px;display:flex;flex-direction:column;flex:none}
.center-top{height:679px;display:flex}
.canvas{width:1269px;background:#333;padding-left:39px;flex:none}
.focus{width:1189px;height:668px;border:3px dotted #777;border-top:0;padding:0 0 16px}
.visual{height:649px;background:#000;position:relative;border:solid #e8e8e8;border-width:0 1px 1px 0;border-radius:5px 0 4px 0;overflow:visible;display:flex;flex-direction:column;color:#fff}
.vis-title{height:33px;margin:0;background:#1c1c1c;text-align:center;font-size:15.800px;font-weight:700;line-height:35px;padding-left:3px;letter-spacing:-.25px;color:#fff;white-space:nowrap;border-radius:5px 0 0 0;flex:none}
.vis-actions{position:absolute;right:-1px;top:2px;display:flex;gap:6px}
.va{width:35px;height:33px;background:#fff;display:flex;align-items:center;justify-content:center}
.va svg{width:26px;height:24px}
.va-dots{font-size:13px;color:#666;letter-spacing:2px;line-height:33px}
.chart{display:flex;height:480px;margin-top:47px;flex:none;position:relative}
.y-title{width:30px;font-size:10px;font-weight:700;writing-mode:vertical-rl;transform:rotate(180deg);text-align:center;line-height:30px;white-space:nowrap;margin-top:3px;flex:none}
.plot{width:1000px;display:flex;flex-direction:column;gap:22.500px;flex:none}
.row{height:78px;display:flex;align-items:center;flex:none}
.cat{width:82px;text-align:right;font-size:9.500px;font-weight:600;margin-right:8px;white-space:nowrap;flex:none;letter-spacing:-.1px;padding-top:1px}
.bar{display:flex;height:78px}
.seg{display:flex;align-items:center;justify-content:center;font-size:10.500px;color:#fff;flex:none;letter-spacing:-.2px;padding-bottom:1px}
.c1{background:#118dff}
.c2{background:#12239e}
.c3{background:#e66c37}
.c4{background:#6b007b}
.c5{background:#e044a7}
.c6{background:#744ec2}
.legend{list-style:none;margin:0;padding:0;position:absolute;left:1080px;top:186px;display:flex;flex-direction:column}
.legend li{height:23.400px;display:flex;align-items:center;font-size:10.300px;font-weight:600;letter-spacing:-.1px;white-space:nowrap}
.legend i{width:9px;height:9px;border-radius:50%;margin-right:2px;flex:none}
.x-ticks{display:flex;margin-left:41px;margin-top:46px;font-size:10px;font-weight:600;flex:none}
.x-ticks span{width:158px;text-align:center;height:16px;line-height:16px}
.x-title{text-align:center;font-size:12.500px;font-weight:700;margin-top:1px;letter-spacing:-.2px;width:1188px;flex:none}

/* filters */
.filters{width:49px;background:#fff;border-right:1px solid #ddd;display:flex;flex-direction:column;align-items:center;padding-top:20px;padding-left:2px;flex:none}
.chev2{width:18px;height:18px}
.fil-ic{width:18px;height:20px;margin-top:24px;margin-left:2px}
.fil-tx{writing-mode:vertical-rl;font-size:21.500px;font-weight:600;color:#111;margin-top:10px;line-height:20px;white-space:nowrap}

/* tab bar */
.tabbar{height:53px;display:flex;flex:none}
.tab-tools{width:191px;display:flex;align-items:center;border-left:1px solid #d8d8d6;border-bottom:1px solid #ddd}
.tool-desk{width:36px;margin-left:14px;padding:0 4px;height:44px;border-bottom:3px solid #117865;border-radius:0 0 2px 2px}
.tool-desk svg{width:28px;height:22px;margin-top:8px}
.tool-phone{margin-left:38px;margin-top:-8px}
.tool-phone svg{width:18px;height:30px}
.arrow{width:0;height:0;border-top:5px solid transparent;border-bottom:5px solid transparent;margin-top:-4px}
.arrow-l{border-right:6px solid #c8c6c4;margin-left:33px}
.arrow-r{border-left:6px solid #111;margin-left:26px}
.ptab{background:#fff;height:53px;display:flex;align-items:center;justify-content:center;font-size:17.400px;letter-spacing:-.2px;border-left:1px solid #bbb;white-space:nowrap;color:#333;flex:none;position:relative}
.ptab-1{width:307px}
.ptab-2{width:421px;font-weight:500;font-size:17.700px;color:#111;border-bottom:6px solid #117865;padding:6px 5px 0 0;letter-spacing:-.3px}
.ptab-3{width:340px;padding-right:13px;font-size:17.200px}
.ptab-x{position:absolute;right:7px;top:1px;font-size:13px;font-weight:600}
.ptab-add{width:59px;background:#117865;color:#fff;display:flex;align-items:center;justify-content:center;font-size:26px;font-weight:700;line-height:1;height:52px;flex:none}

/* visualizations pane */
.viz{width:271px;background:#f3f2f1;border-right:1px solid #e0dfdd;position:relative;flex:none;height:732px;display:flex;flex-direction:column}
.pane-head{height:60px;display:flex;align-items:center;justify-content:space-between;padding:0 11px 0 12px;flex:none}
.pane-head h3{margin:0;font-size:22.700px;font-weight:600;color:#222;letter-spacing:-.2px;padding-bottom:2px}
.build-tx{font-size:17px;font-weight:500;margin:0 0 0 12px;height:26px;line-height:16px;letter-spacing:-.1px;flex:none}
.build-row{display:flex;align-items:center;padding-left:12px;height:48px;flex:none}
.build-on{width:48px;height:48px;background:#c8c8c6;border-radius:2px;display:flex;align-items:center;justify-content:center}
.build-on svg{width:36px;height:40px}
.build-fmt{width:36px;height:38px;margin-left:56px}
.notch-line{height:19px;border-bottom:1px solid #999;position:relative;flex:none}
.notch{position:absolute;left:28px;bottom:-8px;width:16px;height:16px;background:#f3f2f1;border:solid #999;border-width:1px 0 0 1px;transform:rotate(45deg)}
.viz-grid{display:grid;grid-template-columns:repeat(6,42px);grid-auto-rows:41.700px;padding:11px 0 0 9px;height:352px;flex:none;justify-items:center;align-items:center;align-content:start}
.vi{width:28px;height:30px;overflow:visible}
.vi-more{font-size:9px;color:#222;text-align:center;line-height:30px;white-space:nowrap;letter-spacing:1px;font-weight:700}
.vi .a{fill:none;stroke:#444;stroke-width:1.500}
.vi .a2{fill:none;stroke:#1e78c2;stroke-width:1.500}
.vi .w{fill:#fff;stroke:#444;stroke-width:1.300}
.vi .b{fill:#6cb0ea;stroke:#1e78c2;stroke-width:1.500}
.vi .g{fill:#bbb;stroke:#777;stroke-width:1.300}
.vi .l{fill:none;stroke:#1e78c2;stroke-width:1.500}
.vi .ld{fill:none;stroke:#444;stroke-width:1.500}
.n123{font:14px "Noto Sans",sans-serif;fill:#2b88d8;text-anchor:middle;letter-spacing:-.8px}
.ltr-r{font:700 24px "Noto Sans",sans-serif;fill:#1e78c2;text-anchor:middle}
.ltr-py{font:700 24px "Noto Sans",sans-serif;fill:#1e78c2;text-anchor:middle;letter-spacing:-1px}
.wells{flex:1;border-top:2px solid #e2e1df;position:relative;padding-top:13px}
.well-lb{font-size:16.500px;padding-left:18px;height:21px;line-height:21px;color:#333;letter-spacing:-.1px}
.well-box{width:254px;height:42px;background:#fff;border:1px dashed #c8c6c4;border-radius:2px;margin:10px 0 0 6px;padding-left:15px;line-height:37px;font-size:17px;color:#333}
.drill{font-size:16.800px;font-weight:600;color:#3a3938;padding-left:18px;margin-top:16px;height:24px;line-height:24px}
.tg-row{display:flex;justify-content:space-between;align-items:center;padding:0 33px 0 18px;font-size:16.800px;height:24px;color:#333;margin-top:12px}
.tg-row+.tg-row{margin-top:16px}
.tg{width:48px;height:24px;border-radius:12px;display:flex;align-items:center;font-size:13px;padding:0 6px;gap:3px;letter-spacing:-.3px}
.tg i{width:12px;height:12px;border-radius:50%;flex:none}
.tg-off{border:1px solid #777;background:#fff;color:#666}
.tg-off i{background:#605e5c}
.tg-on{background:#117865;color:#fff;justify-content:space-between}
.tg-on i{background:#fff}
.scroll{position:absolute;right:0;top:2px;width:9px;height:171px;border-radius:5px;background:#8a8886}

/* data pane */
.data{flex:1;background:#f3f2f1;height:732px}
.data-search{height:35px;width:257px;margin:8px 0 0 6px;background:#fff;border:1px solid #d8d8d6;border-bottom:1px solid #777;border-radius:6px;display:flex;align-items:center;padding-left:18px;gap:10px;color:#605e5c;font-size:19.500px}
.data-search span{padding-top:1px}
.data-search svg{width:22px;height:22px}
.tree{display:flex;align-items:center;height:24px;margin-top:21px;padding-left:25px;font-size:17.200px;color:#444;white-space:nowrap;letter-spacing:-.2px}
.tree-cv{width:10px;height:16px}
.tree-ic{width:18px;height:18px;margin-left:9px;margin-right:8px}

/* status */
.status{height:32px;background:#f3f2f1;border-top:1px solid #e0dfdd;display:flex;align-items:center;flex:none;font-size:17px;color:#555;position:relative;z-index:1;padding-top:3px}
.page-no{margin-left:6px;width:1597px;letter-spacing:-.2px}
.zm-btn{width:10px;text-align:center;font-size:19px;font-weight:600;color:#555}
.zm-plus{margin-left:6px;width:16px}
.slider{width:150px;height:1px;background:#777;margin-left:3px;position:relative}
.thumb{position:absolute;left:40px;top:-8px;width:6px;height:17px;background:#605e5c}
.tick{position:absolute;left:75px;top:-3px;width:1px;height:7px;background:#555}
.zm-val{margin-left:18px;width:63px;font-size:16.500px}
.fit{width:24px;height:18px}
```
